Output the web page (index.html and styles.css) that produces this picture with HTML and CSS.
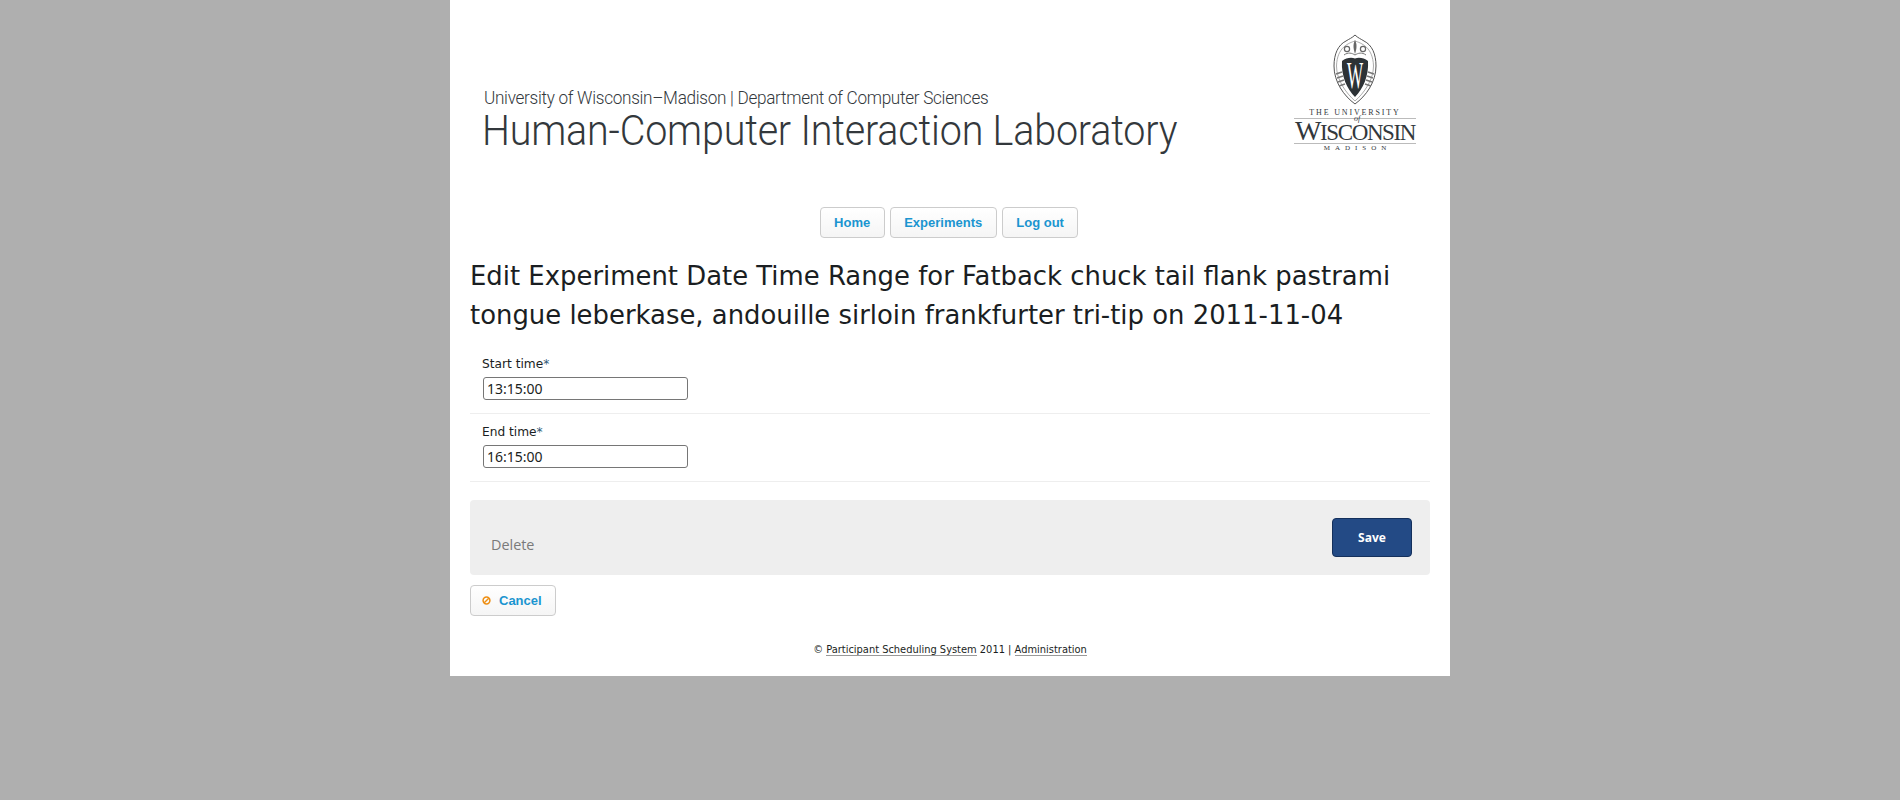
FILE: index.html
```html
<!DOCTYPE html>
<html lang="en">

<head>
    <meta charset="UTF-8">
    <meta name="viewport" content="width=device-width, initial-scale=1.0">
    <title>Edit Experiment Date Time Range</title>

    <link rel="stylesheet" href="styles.css">
</head>

<body>
    <div id="wrapper">
        <header id="banner">
            <div id="banner-text">
                <div class="dept">University of Wisconsin–Madison | Department of Computer Sciences</div>
                <div class="lab">Human-Computer Interaction Laboratory</div>
            </div>
            <div id="logo">
                <svg class="crest" viewBox="0 0 46 71" width="46" height="71">
                    <!-- outer and inner rings -->
                    <path d="M23 1 C20 4 17 5 14 7 C6 11 2 20 2 32 C2 48 12 62 23 70 C34 62 44 48 44 32 C44 20 40 11 32 7 C29 5 26 4 23 1 Z" fill="#fff" stroke="#555" stroke-width="1"/>
                    <path d="M23 7 C17 9 5 13 4.500 32 C4.500 46 14 59 23 67 C32 59 41.500 46 41.500 32 C41 13 29 9 23 7 Z" fill="none" stroke="#888" stroke-width="0.700"/>
                    <!-- scrolls under the finial -->
                    <circle cx="15" cy="15" r="2.600" fill="none" stroke="#666" stroke-width="1.200"/>
                    <circle cx="31" cy="15" r="2.600" fill="none" stroke="#666" stroke-width="1.200"/>
                    <path d="M23 6 C21 10 21 14 23 20 C25 14 25 10 23 6 Z" fill="#666"/>
                    <path d="M12 21 C16 18 20 19 23 21 C26 19 30 18 34 21" fill="none" stroke="#777" stroke-width="1"/>
                    <!-- shield -->
                    <path d="M10 27 C14 24 19 23 23 24.500 C27 23 32 24 36 27 C37 42 31 55 23 63 C15 55 9 42 10 27 Z" fill="#2d3236"/>
                    <!-- side bands -->
                    <path d="M4 40 L10 38 M5 44 L11 42 M6 48 L12 46 M7 52 L13 50 M42 40 L36 38 M41 44 L35 42 M40 48 L34 46 M39 52 L33 50" stroke="#777" stroke-width="1.500"/>
                    <text class="crest-w" transform="translate(23 54) scale(0.45 1)">W</text>
                </svg>
                <div class="the-univ">THE UNIVERSITY</div>
                <div class="wisc"><span class="of">of</span><span class="big-w">W</span>ISCONSIN</div>
                <div class="madison">MADISON</div>
            </div>
        </header>

        <nav id="menu">
            <a class="btn" href="#">Home</a>
            <a class="btn" href="#">Experiments</a>
            <a class="btn" href="#">Log out</a>
        </nav>

        <main>
            <h1>Edit Experiment Date Time Range for Fatback chuck tail flank pastrami tongue leberkase, andouille sirloin frankfurter tri-tip on 2011-11-04</h1>

            <form>
                <div class="field">
                    <label for="start-time">Start time<span class="req">*</span></label>
                    <input type="text" id="start-time" value="13:15:00">
                </div>
                <div class="field">
                    <label for="end-time">End time<span class="req">*</span></label>
                    <input type="text" id="end-time" value="16:15:00">
                </div>

                <div id="actions">
                    <a class="delete" href="#">Delete</a>
                    <button type="button" class="save">Save</button>
                </div>
            </form>

            <a class="btn cancel" href="#">
                <svg viewBox="0 0 10 10" width="9" height="9">
                    <circle cx="5" cy="5" r="3.800" fill="none" stroke="#ee8f14" stroke-width="1.700"/>
                    <path d="M2.500 7.500 L7.500 2.500" stroke="#ee8f14" stroke-width="1.500"/>
                </svg>
                Cancel
            </a>
        </main>

        <footer>
            © <a href="#">Participant Scheduling System</a> 2011 | <a href="#">Administration</a>
        </footer>
    </div>
</body>

</html>
```
FILE: styles.css
```css
html,
body {
    padding: 0;
    margin: 0;
}

* {
    box-sizing: border-box;
}

body {
    min-height: 100vh;
    background-color: #afafaf;
    color: #1a1e22;
    font-family: "DejaVu Sans", sans-serif;
}

#wrapper {
    width: 1000px;
    margin: 0 auto;
    height: 676px;
    background-color: white;
}

#banner {
    height: 207px;
    padding: 34px 34px 0 32px;
    display: flex;
    justify-content: space-between;
}

#banner-text {
    padding-top: 54px;
    color: #33383c;
    font-family: "Roboto", sans-serif;
    font-weight: 300;
}

.dept {
    font-size: 17.500px;
    line-height: 20px;
    letter-spacing: -0.300px;
    margin-left: 2px;
    transform: scaleX(0.98);
    transform-origin: left;
}

.lab {
    font-size: 42px;
    line-height: 46px;
    letter-spacing: -0.200px;
    transform: scaleX(0.94);
    transform-origin: left;
}

#logo {
    width: 122px;
    display: flex;
    flex-direction: column;
    align-items: center;
    font-family: "Liberation Serif", serif;
    color: #33383c;
}

.crest {
    display: block;
}

.crest-w {
    font-family: "Liberation Serif", serif;
    font-size: 38px;
    fill: white;
    text-anchor: middle;
}

.the-univ {
    font-size: 8px;
    line-height: 9px;
    letter-spacing: 1.850px;
    margin-top: 3px;
}

.wisc {
    position: relative;
    width: 100%;
    height: 26px;
    text-align: center;
    font-size: 23px;
    line-height: 24px;
    letter-spacing: -1.400px;
    white-space: nowrap;
    border-top: 1px solid #bbb;
    border-bottom: 1px solid #bbb;
    margin-top: 1px;
}

.big-w {
    font-size: 28px;
}

.of {
    position: absolute;
    top: -2px;
    left: 60px;
    font-size: 8px;
    line-height: 4px;
    font-style: italic;
    letter-spacing: 0;
}

.madison {
    font-size: 7px;
    line-height: 9px;
    letter-spacing: 5px;
    margin-right: -5px;
}

#menu {
    display: flex;
    justify-content: center;
    gap: 5px;
    padding-right: 2px;
}

.btn {
    display: inline-flex;
    align-items: center;
    height: 31px;
    padding: 0 13.500px;
    border: 1px solid #ccc;
    border-radius: 4px;
    background: linear-gradient(#fff, #f5f5f5);
    color: #1b95d0;
    font-family: "Liberation Sans", sans-serif;
    font-size: 13px;
    font-weight: bold;
    text-decoration: none;
}

main {
    padding: 0 20px;
}

h1 {
    margin: 19px 0 0;
    font-size: 25.900px;
    font-weight: normal;
    line-height: 39px;
}

form {
    margin-top: 11px;
}

.field {
    padding: 11px 12px 13px;
    border-bottom: 1px solid #eee;
}

label {
    display: block;
    font-size: 12.200px;
    line-height: 14px;
    margin-bottom: 6px;
}

.req {
    color: #2f5a78;
}

input {
    display: block;
    width: 205px;
    height: 23px;
    padding: 0 3px;
    margin-left: 1px;
    border: 1px solid #767676;
    border-radius: 3px;
    font-family: "Noto Sans", sans-serif;
    font-size: 14px;
    color: #1a1e22;
}

#actions {
    margin-top: 18px;
    height: 75px;
    padding: 18px 18px 18px 21px;
    background-color: #eee;
    border-radius: 4px;
    display: flex;
    justify-content: space-between;
}

.delete {
    margin-top: 17px;
    color: #7a7a7a;
    font-family: "Open Sans", sans-serif;
    font-size: 14.400px;
    line-height: 19px;
    text-decoration: none;
}

.save {
    width: 80px;
    height: 39px;
    border: 1px solid #14305c;
    border-radius: 4px;
    background-color: #234a85;
    color: white;
    font-family: "Open Sans", sans-serif;
    font-size: 12px;
    font-weight: bold;
    cursor: pointer;
}

.cancel {
    margin-top: 10px;
    gap: 8px;
    padding-left: 11px;
    padding-right: 13px;
}

footer {
    margin-top: 27px;
    text-align: center;
    font-size: 9.900px;
    line-height: 14px;
}

footer a {
    color: inherit;
    text-decoration: none;
    border-bottom: 1px solid #999;
}
```
